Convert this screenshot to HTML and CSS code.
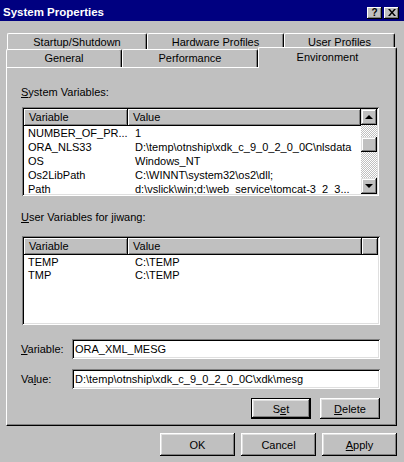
FILE: index.html
```html
<!DOCTYPE html>
<html>
<head>
<meta charset="utf-8">
<link rel="stylesheet" href="styles.css">
</head>
<body>
<div class="win">
  <div class="titlebar">
    <span class="title">System Properties</span>
    <div class="tb-btns">
      <span class="tbb help">?</span>
      <span class="tbb close"><svg width="8" height="7" viewBox="0 0 8 7"><path d="M0 0h2l2 2.5 2-2.5h2l-3 3.5 3 3.5h-2l-2-2.5-2 2.5h-2l3-3.5z" fill="#000"/></svg></span>
    </div>
  </div>

  <div class="tabs">
    <div class="tabrow back">
      <div class="tab w-startup">Startup/Shutdown</div>
      <div class="tab w-hardware">Hardware Profiles</div>
      <div class="tab w-user">User Profiles</div>
    </div>
    <div class="tabrow front">
      <div class="tab w-general">General</div>
      <div class="tab w-perf">Performance</div>
      <div class="tab sel w-env">Environment</div>
    </div>
  </div>

  <div class="panel">
    <div class="label"><u>S</u>ystem Variables:</div>
    <div class="list sys">
      <div class="list-main">
        <div class="hdr">
          <div class="hc c1">Variable</div>
          <div class="hc c2">Value</div>
        </div>
        <div class="rows">
          <div class="row"><span class="c1">NUMBER_OF_PR...</span><span class="c2">1</span></div>
          <div class="row"><span class="c1">ORA_NLS33</span><span class="c2">D:\temp\otnship\xdk_c_9_0_2_0_0C\nlsdata</span></div>
          <div class="row"><span class="c1">OS</span><span class="c2">Windows_NT</span></div>
          <div class="row"><span class="c1">Os2LibPath</span><span class="c2">C:\WINNT\system32\os2\dll;</span></div>
          <div class="row"><span class="c1">Path</span><span class="c2">d:\vslick\win;d:\web_service\tomcat-3_2_3...</span></div>
        </div>
      </div>
      <div class="vscroll">
        <div class="sbtn"><span class="arr up"></span></div>
        <div class="track"><div class="thumb"></div></div>
        <div class="sbtn"><span class="arr down"></span></div>
      </div>
    </div>

    <div class="label ulabel"><u>U</u>ser Variables for jiwang:</div>
    <div class="list usr">
      <div class="list-main">
        <div class="hdr">
          <div class="hc c1">Variable</div>
          <div class="hc c2u">Value</div>
          <div class="hc c3"></div>
        </div>
        <div class="rows">
          <div class="row"><span class="c1">TEMP</span><span class="c2">C:\TEMP</span></div>
          <div class="row"><span class="c1">TMP</span><span class="c2">C:\TEMP</span></div>
        </div>
      </div>
    </div>

    <div class="field-row first">
      <span class="flabel"><u>V</u>ariable:</span>
      <div class="field">ORA_XML_MESG</div>
    </div>
    <div class="field-row">
      <span class="flabel">Va<u>l</u>ue:</span>
      <div class="field">D:\temp\otnship\xdk_c_9_0_2_0_0C\xdk\mesg</div>
    </div>
    <div class="btn-row">
      <div class="btn default">S<u>e</u>t</div>
      <div class="btn"><u>D</u>elete</div>
    </div>
  </div>

  <div class="dlg-btns">
    <div class="btn big">OK</div>
    <div class="btn big">Cancel</div>
    <div class="btn big"><u>A</u>pply</div>
  </div>
</div>
</body>
</html>
```

FILE: styles.css
```css
* { box-sizing: border-box; }
html, body { margin: 0; padding: 0; }
body {
  width: 404px;
  height: 462px;
  overflow: hidden;
  background: #c0c0c0;
  font-family: "Liberation Sans", Arial, sans-serif;
  font-size: 11px;
  color: #000;
}
.win { width: 404px; height: 462px; }

.titlebar {
  height: 21px;
  background: #000080;
  display: flex;
  align-items: center;
  padding: 2px 5px 0 3px;
}
.title {
  color: #fff;
  font-weight: bold;
  font-size: 11.5px;
  flex: 1;
}
.tb-btns { display: flex; gap: 2px; margin-top: 2px; }
.tbb {
  width: 15px;
  height: 12px;
  background: #c0c0c0;
  box-shadow: inset -1px -1px #000, inset 1px 1px #fff, inset -2px -2px #808080;
  display: flex;
  align-items: center;
  justify-content: center;
  font-weight: bold;
  font-size: 10px;
  line-height: 1;
}

.tabs { padding-top: 12px; }
.tabrow { display: flex; }
.tabrow.back { margin-left: 7px; height: 16px; }
.tabrow.front { margin-left: 6px; height: 18px; align-items: flex-end; position: relative; }
.tab {
  height: 16px;
  border-top: 1px solid #fff;
  border-left: 1px solid #fff;
  border-right: 1px solid #000;
  box-shadow: inset -1px 0 #808080;
  border-top-left-radius: 2px;
  border-top-right-radius: 2px;
  display: flex;
  align-items: center;
  justify-content: center;
  line-height: 13px;
  background: #c0c0c0;
}
.back .tab { padding-top: 1px; }
.front .tab { height: 18px; }
.tab.sel {
  height: 21px;
  margin-bottom: -1px;
  position: relative;
  z-index: 2;
  align-items: flex-start;
  padding-top: 3px;
}
.w-startup { width: 140px; }
.w-hardware { width: 137px; }
.w-user { width: 111px; }
.w-general { width: 116px; }
.w-perf { width: 136px; }
.w-env { width: 139px; }

.panel {
  margin-left: 6px;
  width: 391px;
  height: 359px;
  border-top: 1px solid #fff;
  border-left: 1px solid #fff;
  border-right: 1px solid #000;
  border-bottom: 1px solid #000;
  box-shadow: inset -1px -1px #808080;
  padding: 18px 16px 0 15px;
  position: relative;
  z-index: 1;
}
.label { line-height: 13px; margin-left: -1px; }
.ulabel { margin-top: 15px; }

.list {
  background: #fff;
  display: flex;
  box-shadow: inset 1px 1px #808080, inset -1px -1px #fff, inset 2px 2px #000, inset -2px -2px #dfdfdf;
  padding: 2px;
  overflow: hidden;
}
.list.sys { width: 357px; height: 89px; margin-top: 8px; }
.list.usr { width: 358px; height: 89px; margin-top: 12px; }
.list-main { flex: 1; overflow: hidden; }
.hdr { display: flex; height: 17px; }
.hc {
  background: #c0c0c0;
  box-shadow: inset -1px -1px #000, inset 1px 1px #fff, inset -2px -2px #808080;
  line-height: 17px;
  padding-left: 5px;
  height: 17px;
}
.hc.c1 { width: 104px; }
.hc.c2 { flex: 1; }
.hc.c2u { width: 234px; }
.hc.c3 { flex: 1; }
.row { display: flex; height: 14px; line-height: 14px; white-space: nowrap; }
.usr .row { height: 13px; line-height: 14px; }
.row .c1 { width: 104px; padding-left: 4px; flex: none; }
.row .c2 { padding-left: 7px; }

.vscroll { width: 16px; display: flex; flex-direction: column; }
.sbtn, .thumb {
  width: 16px;
  height: 16px;
  background: #c0c0c0;
  box-shadow: inset -1px -1px #000, inset 1px 1px #dfdfdf, inset -2px -2px #808080, inset 2px 2px #fff;
  display: flex;
  align-items: center;
  justify-content: center;
}
.track {
  flex: 1;
  background: repeating-conic-gradient(#c0c0c0 0 25%, #fff 0 50%) 0 0 / 2px 2px;
}
.thumb { margin-top: 12px; height: 15px; }
.arr { width: 0; height: 0; border-left: 4px solid transparent; border-right: 4px solid transparent; }
.arr.up { border-bottom: 4px solid #000; margin-top: -1px; }
.arr.down { border-top: 4px solid #000; }

.field-row { display: flex; align-items: center; margin-top: 10px; }
.field-row.first { margin-top: 14px; }
.flabel { width: 51px; margin-left: -1px; }
.field {
  width: 308px;
  height: 20px;
  background: #fff;
  box-shadow: inset 1px 1px #808080, inset -1px -1px #fff, inset 2px 2px #000, inset -2px -2px #dfdfdf;
  line-height: 20px;
  padding-left: 3px;
  white-space: nowrap;
  overflow: hidden;
}
.btn-row { display: flex; justify-content: flex-end; gap: 9px; margin-top: 9px; margin-right: 0; }
.btn {
  width: 60px;
  height: 21px;
  background: #c0c0c0;
  box-shadow: inset -1px -1px #000, inset 1px 1px #fff, inset -2px -2px #808080, inset 2px 2px #dfdfdf;
  display: flex;
  align-items: center;
  justify-content: center;
}
.btn.default {
  border: 1px solid #000;
}
.dlg-btns {
  display: flex;
  justify-content: flex-end;
  gap: 6px;
  padding: 7px 7px 0 0;
}
.btn.big { width: 75px; height: 23px; }
```
